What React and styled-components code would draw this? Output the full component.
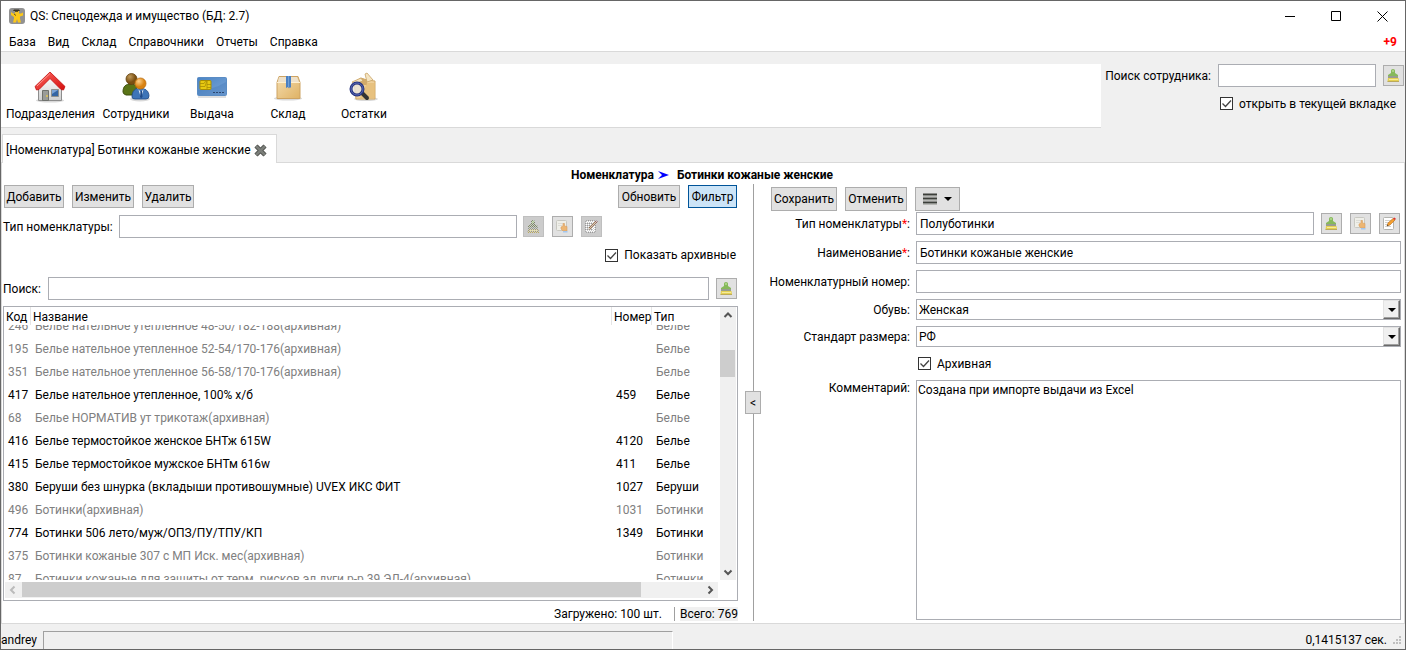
import React, { useLayoutEffect, useRef, useState } from 'react';
import styled, { createGlobalStyle, css } from 'styled-components';

const GlobalStyle = createGlobalStyle`
  * {
    box-sizing: border-box;
  }

  body {
    margin: 0;
  }

  body, button, input, select, textarea {
    font-family: Roboto, 'Noto Sans', sans-serif;
    font-size: 12px;
    line-height: 16px;
    color: #000;
  }
`;

const Window = styled.div`
  height: 100vh;
  min-height: 480px;
  display: flex;
  flex-direction: column;
  overflow: hidden;
  background: #f0f0f0;
  border: 1px solid #666;
  white-space: nowrap;
`;

const TitleBar = styled.header`
  height: 30px;
  flex: none;
  display: flex;
  align-items: center;
  gap: 5px;
  padding-left: 8px;
  background: #fff;
`;

const WindowTitle = styled.span`
  flex: 1;
`;

const WindowButtons = styled.div`
  display: flex;
`;

const WindowButton = styled.button`
  width: 46px;
  height: 29px;
  display: flex;
  align-items: center;
  justify-content: center;
  padding: 0;
  border: none;
  background: none;
`;

const MenuBar = styled.nav`
  height: 21px;
  flex: none;
  display: flex;
  align-items: center;
  gap: 12px;
  padding: 2px 8px 0;
  background: #fff;
  border-bottom: 1px solid #d9d9d9;
`;

const MenuItem = styled.button`
  padding: 0;
  border: none;
  background: none;
`;

const Notifications = styled.strong`
  margin-left: auto;
  color: #f00;
`;

const TopArea = styled.div`
  flex: none;
  display: flex;
  gap: 4px;
  padding: 12px 1px 6px 0;
`;

const Toolbar = styled.div`
  flex: 1;
  height: 64px;
  display: flex;
  padding-left: 2px;
  background: #fff;
  border-bottom: 1px solid #d9d9d9;
`;

const ToolButton = styled.button`
  min-width: 76px;
  display: flex;
  flex-direction: column;
  align-items: center;
  gap: 3px;
  padding: 7px 3px 0;
  border: none;
  background: none;
`;

const EmployeeSearch = styled.div`
  display: grid;
  grid-template-columns: auto 158px 21px;
  grid-template-rows: 23px 23px;
  align-items: center;
  row-gap: 5px;
  column-gap: 7px;
`;

const CheckLabel = styled.label`
  display: flex;
  align-items: center;
  gap: 6px;
`;

const EmployeeCheck = styled(CheckLabel)`
  grid-column: 2 / 4;
  padding-left: 2px;
`;

const CheckWrap = styled.span`
  position: relative;
  width: 13px;
  height: 13px;
  flex: none;

  svg {
    position: absolute;
    inset: 0;
    pointer-events: none;
  }
`;

const CheckInput = styled.input`
  appearance: none;
  display: block;
  width: 13px;
  height: 13px;
  margin: 0;
  border: 1px solid #333;
  background: #fff;

  &:not(:checked) + svg {
    display: none;
  }
`;

const TextInput = styled.input`
  flex: 1;
  min-width: 0;
  width: 100%;
  height: 23px;
  padding: 0 3px;
  border: 1px solid #abadb3;
  border-radius: 0;
  background: #fff;
  outline: none;
`;

const Button = styled.button`
  height: ${props => (props.$tall ? '24px' : '23px')};
  min-width: ${props => props.$width};
  display: flex;
  align-items: center;
  justify-content: center;
  gap: 7px;
  padding: 0 1px;
  border: 1px solid #adadad;
  background: #e1e1e1;

  ${props => props.$active && css`
    border-color: #005499;
    background: #cce4f7;
  `}
`;

const IconButton = styled.button`
  width: 21px;
  height: 21px;
  flex: none;
  display: flex;
  align-items: center;
  justify-content: center;
  padding: 0;
  border: 1px solid #adadad;
  background: #e1e1e1;

  &:disabled {
    border-color: #bfbfbf;
    background: #ccc;
  }
`;

const IconGroup = styled.div`
  display: flex;
  gap: 8px;
`;

const Tabs = styled.div`
  height: 29px;
  flex: none;
  display: flex;
  border-bottom: 1px solid #d9d9d9;
`;

const Tab = styled.div`
  height: 29px;
  display: flex;
  align-items: center;
  gap: 3px;
  margin-left: 1px;
  padding: 2px 9px 0 3px;
  background: #fff;
  border: 1px solid #d9d9d9;
  border-bottom: none;
`;

const TabClose = styled.button`
  display: flex;
  padding: 0;
  border: none;
  background: none;
`;

const Page = styled.main`
  flex: 1;
  min-height: 0;
  display: flex;
  flex-direction: column;
  padding: 0 3px 2px 1px;
  background: #fff;
  border: 1px solid #d9d9d9;
  border-width: 0 1px;
`;

const PageTitle = styled.h1`
  height: 21px;
  flex: none;
  display: flex;
  align-items: center;
  justify-content: center;
  gap: 8px;
  margin: 0;
  padding-top: 3px;
  font-size: 12px;
  font-weight: 700;

  svg {
    margin-left: -4px;
  }
`;

const Panes = styled.div`
  flex: 1;
  min-height: 0;
  display: grid;
  grid-template-columns: minmax(0, 735fr) 16px minmax(0, 633fr);
  column-gap: 7px;
`;

const JournalPane = styled.section`
  min-height: 0;
  display: flex;
  flex-direction: column;
`;

const ButtonRow = styled.div`
  flex: none;
  display: flex;
  gap: 8px;
  padding: 1px 1px 0;
`;

const Spacer = styled.span`
  flex: 1;
`;

const FilterRow = styled.div`
  display: flex;
  align-items: center;
  gap: 6px;
  margin-top: 7px;
  padding-right: 136px;
`;

const ArchiveRow = styled.div`
  display: flex;
  justify-content: flex-end;
  margin-top: 9px;
  padding-right: 2px;
`;

const SearchRow = styled.div`
  display: flex;
  align-items: center;
  gap: 7px;
  margin-top: 14px;
  padding-right: 1px;
`;

const JournalFrame = styled.div`
  flex: 1;
  min-height: 0;
  display: grid;
  grid-template-columns: minmax(0, 1fr) 16px;
  grid-template-rows: minmax(0, 1fr) 16px;
  row-gap: 2px;
  margin-top: 6px;
  padding-right: 1px;
  padding-bottom: 2px;
  border: 1px solid #abadb3;
`;

const TableViewport = styled.div`
  min-height: 0;
  overflow: hidden;
`;

const Table = styled.table`
  width: 100%;
  table-layout: fixed;
  border-collapse: separate;
  border-spacing: 0;
`;

const HeadCell = styled.th`
  position: sticky;
  top: 0;
  width: ${props => props.$width || 'auto'};
  height: 18px;
  padding: 2px 0 0 2px;
  background: #fff;
  border-right: 1px solid #e5e5e5;
  font-weight: 400;
  text-align: left;

  &:last-child {
    border-right: none;
  }
`;

const Row = styled.tr`
  color: ${props => (props.$archived ? '#808080' : '#000')};
`;

const Cell = styled.td`
  height: 23px;
  padding: 0 0 0 4px;
`;

const VerticalScroll = styled.div`
  display: flex;
  flex-direction: column;
  background: #f0f0f0;
`;

const HorizontalScroll = styled.div`
  display: flex;
  margin: 0 2px 0 1px;
  background: #f0f0f0;
`;

const ScrollArrow = styled.button`
  width: 16px;
  height: 16px;
  flex: none;
  display: flex;
  align-items: center;
  justify-content: center;
  padding: 0;
  border: none;
  background: none;
`;

const VerticalTrack = styled.div`
  flex: 1;
  padding-top: 27px;
`;

const VerticalThumb = styled.div`
  width: 15px;
  height: 27px;
  background: #cdcdcd;
`;

const HorizontalTrack = styled.div`
  flex: 1;
  padding-left: 1px;
`;

const HorizontalThumb = styled.div`
  width: 91%;
  height: 15px;
  background: #cdcdcd;
`;

const Totals = styled.div`
  height: 20px;
  flex: none;
  display: flex;
  align-items: center;
  justify-content: flex-end;
  padding-top: 6px;
`;

const Loaded = styled.span`
  padding-right: 12px;
`;

const Total = styled.span`
  height: 14px;
  display: flex;
  align-items: center;
  margin-left: 5px;
  background: #f0f0f0;
`;

const TotalDivider = styled.span`
  width: 1px;
  height: 14px;
  background: #a0a0a0;
`;

const Splitter = styled.div`
  display: flex;
  flex-direction: column;
  align-items: center;
`;

const SplitterLine = styled.span`
  flex: 1;
  width: 1px;
  background: #a0a0a0;
`;

const CollapseButton = styled(Button)`
  width: 16px;
`;

const EditorPane = styled.section`
  min-height: 0;
  display: flex;
  flex-direction: column;
  padding: 3px 0 1px;
`;

const EditorButtons = styled.div`
  display: flex;
  gap: 8px;
  padding-left: 3px;
`;

const Form = styled.div`
  flex: 1;
  min-height: 0;
  display: grid;
  grid-template-columns: 142px minmax(0, 1fr);
  grid-template-rows: 23px 23px 23px 21px 21px 21px minmax(0, 1fr);
  gap: 6px;
  align-items: center;
  margin-top: 1px;
`;

const FieldLabel = styled.label`
  justify-self: end;
  align-self: ${props => (props.$top ? 'start' : 'center')};
`;

const Required = styled.span`
  color: #f00;
`;

const FieldRow = styled.div`
  display: flex;
  align-items: center;
  gap: 7px;
  padding-right: 1px;
`;

const SelectWrap = styled.div`
  position: relative;
  height: 21px;
`;

const Select = styled.select`
  appearance: none;
  display: block;
  width: 100%;
  height: 21px;
  padding: 0 20px 0 2px;
  border: 1px solid #abadb3;
  border-radius: 0;
  background: #fff;
  outline: none;
`;

const SelectArrow = styled.span`
  position: absolute;
  top: 1px;
  right: 1px;
  bottom: 1px;
  width: 17px;
  display: flex;
  align-items: center;
  justify-content: center;
  background: #f0f0f0;
  border: 1px solid #e3e3e3;
  border-right-color: #696969;
  border-bottom-color: #696969;
  box-shadow: inset -1px -1px #a0a0a0;
  pointer-events: none;
`;

const ArchivedField = styled(CheckLabel)`
  grid-column: 2;
  padding-left: 2px;
`;

const Comment = styled.textarea`
  display: block;
  width: 100%;
  height: 100%;
  padding: 1px;
  border: 1px solid #abadb3;
  border-radius: 0;
  background: #fff;
  outline: none;
  resize: none;
`;

const StatusBar = styled.footer`
  height: 26px;
  flex: none;
  display: flex;
  align-items: center;
  padding: 7px 3px 0 0;
  border-top: 1px solid #d9d9d9;
`;

const StatusUser = styled.span`
  width: 36px;
`;

const StatusInset = styled.div`
  width: 45%;
  height: 19px;
  margin-left: 6px;
  border-top: 1px solid #a0a0a0;
  border-left: 1px solid #a0a0a0;
  border-right: 1px solid #fff;
`;

const Timing = styled.span`
  margin-left: auto;
  margin-right: 6px;
`;

const AppIcon = () => (
  <svg width="16" height="16" viewBox="0 0 16 16">
    <rect width="16" height="16" rx="3" fill="#929292" />
    <path d="M5 1.500h5l1 1.500H4z" fill="#3a3526" />
    <path d="M6 3h4v3H6z" fill="#f0c22c" />
    <path d="M2 4l2 1.500h8l2-1v3l-3 1v2l1 4H9L8 11l-1 3.500H4l1-4V9L2 7z" fill="#fdc818" />
    <path d="M6 3.500h3M5 6l2 1.500" stroke="#3b3420" strokeWidth=".8" />
  </svg>
);

const HouseIcon = () => (
  <svg width="32" height="32" viewBox="0 0 32 32">
    <defs>
      <linearGradient id="wall" x2="0" y2="1">
        <stop stopColor="#fff" />
        <stop offset="1" stopColor="#cfcfcf" />
      </linearGradient>
      <linearGradient id="roof" x2="1" y2="1">
        <stop stopColor="#ff6a62" />
        <stop offset="1" stopColor="#d40d0d" />
      </linearGradient>
    </defs>
    <ellipse cx="16" cy="29.500" rx="14" ry="2" fill="#000" opacity=".15" />
    <path d="M4.500 15.500L16 5l11.500 10.500v14h-23z" fill="url(#wall)" stroke="#8d8d8d" />
    <path d="M8.500 19.500h6v10h-6z" fill="#9a9c98" stroke="#6f716d" />
    <circle cx="13" cy="25" r="1" fill="#e6c64f" />
    <path d="M17.500 18.500h7v7h-7z" fill="#3465a4" stroke="#8d8f8c" />
    <path d="M18 19h6l-6 4z" fill="#7ba3d5" />
    <path d="M16 1L1 15.500 2.500 19 5 18.500l11-11 11 11 2.500.5 1.500-3.500z" fill="url(#roof)" stroke="#c21010" strokeWidth=".8" />
    <path d="M16 2.500L3 15" stroke="#ff9a94" fill="none" />
  </svg>
);

const PeopleIcon = () => (
  <svg width="32" height="32" viewBox="0 0 32 32">
    <defs>
      <radialGradient id="brownHead" cx=".35" cy=".3">
        <stop stopColor="#c09a5b" />
        <stop offset="1" stopColor="#7b5012" />
      </radialGradient>
      <radialGradient id="orangeHead" cx=".35" cy=".3">
        <stop stopColor="#ffd28c" />
        <stop offset="1" stopColor="#d98211" />
      </radialGradient>
    </defs>
    <ellipse cx="20" cy="28" rx="10" ry="2.500" fill="#000" opacity=".15" />
    <path d="M3 21c0-6 3-8 8-8s7 3 7 9l-4 2H6q-3-1-3-3z" fill="#5a7417" stroke="#3d4e0d" />
    <circle cx="11.500" cy="8" r="5.500" fill="url(#brownHead)" stroke="#65420f" strokeWidth=".8" />
    <path d="M12 26c0-6 3-9 8-9s9 3 9 8q0 3-3 3H15q-3 0-3-2z" fill="#3e75b8" stroke="#204a87" strokeWidth=".8" />
    <path d="M17 17l4 4 4-4-1 0-3 10-3-10z" fill="#e9f0f8" />
    <path d="M20.500 20h1.500l.5 6-1.500 1.500L20 26z" fill="#204a87" />
    <circle cx="20.500" cy="12.500" r="5.500" fill="url(#orangeHead)" stroke="#bd6c0b" strokeWidth=".8" />
  </svg>
);

const CardIcon = () => (
  <svg width="32" height="32" viewBox="0 0 32 32">
    <defs>
      <linearGradient id="card" x2="1" y2="1">
        <stop stopColor="#4a84c4" />
        <stop offset="1" stopColor="#7aa5d8" />
      </linearGradient>
    </defs>
    <path d="M2 25h28v2H2z" fill="#000" opacity=".12" />
    <rect x="1.500" y="6.500" width="29" height="18" rx="1" fill="url(#card)" stroke="#5a8cc4" />
    <path d="M2 19q15 0 28-8v13H2z" fill="#3b70b1" opacity=".3" />
    <rect x="4" y="9.500" width="11" height="9" rx="1" fill="#e8c911" stroke="#a98d05" />
    <path d="M4 12.500h4l2-3m-6 6h5l2-6m0 0v9m0-5h4m-4 3h4" stroke="#a98d05" fill="none" strokeWidth=".8" />
    <path d="M17 21.500h11" stroke="#2c4870" strokeDasharray="2 1" />
  </svg>
);

const BoxIcon = () => (
  <svg width="32" height="32" viewBox="0 0 32 32">
    <defs>
      <linearGradient id="box" x2="1" y2="1">
        <stop stopColor="#f4dcae" />
        <stop offset="1" stopColor="#dfb264" />
      </linearGradient>
    </defs>
    <ellipse cx="16" cy="27.500" rx="14" ry="2" fill="#000" opacity=".15" />
    <path d="M7 5.500h19l2 6v16H5v-16z" fill="url(#box)" stroke="#cda362" />
    <path d="M7 6h18l2 5H6z" fill="#eee1ca" />
    <path d="M5 11.500h23" stroke="#fff0cf" />
    <path d="M14 5h5v12l-1-1-1 1.500-1-1.500-2 1z" fill="#4a80c2" />
    <path d="M16.500 5v11" stroke="#719fd4" />
  </svg>
);

const StockIcon = () => (
  <svg width="32" height="32" viewBox="0 0 32 32">
    <ellipse cx="18" cy="28" rx="12" ry="2" fill="#000" opacity=".15" />
    <path d="M6 11l7-4 6 2 8 1v18H8z" fill="#efd09a" stroke="#d0a968" />
    <path d="M13 7l6 2v5H7z" fill="#d2aa6a" />
    <path d="M17 3l2-1 6 7-6 2zM4 11l9-4 2 3-9 3z" fill="#f5e4c0" stroke="#c9a366" strokeWidth=".8" />
    <path d="M19 12h8v15H12z" fill="#e4ba73" opacity=".7" />
    <path d="M14 22l5 5" stroke="#333" strokeWidth="4" strokeLinecap="round" />
    <circle cx="9" cy="18" r="6" fill="#e8e5df" fillOpacity=".8" stroke="#26327e" strokeWidth="3" />
    <circle cx="9" cy="18" r="6" fill="none" stroke="#5969b4" />
  </svg>
);

// Every other pixel is covered, the way GTK2 paints insensitive icons
const Dither = ({ id }) => (
  <>
    <defs>
      <pattern id={id} width="2" height="2" patternUnits="userSpaceOnUse">
        <path d="M0 0h1v1H0zM1 1h1v1H1z" fill="#ccc" />
      </pattern>
    </defs>
    <rect width="15" height="15" fill={`url(#${id})`} shapeRendering="crispEdges" />
  </>
);

const BrushIcon = ({ disabled }) => (
  <svg width="15" height="15" viewBox="0 0 15 15">
    <path d="M5 2.500Q5 1 7 1t2 1.500V5l3 2v2H2V7l3-2z" fill={disabled ? '#7d8a62' : '#86b95a'} />
    <path d="M6 2h2v2H6z" fill="#a8d383" />
    <path d="M2 8h10v2.500H2z" fill="#979d8e" />
    <path d="M2 10h10.500l.5 3.500H1.500z" fill={disabled ? '#aaa06a' : '#e5d152'} />
    <path d="M3 11.500h9" stroke="#f5eb9b" />
    <path d="M1.500 13.500H13" stroke="#bba95c" />
    {disabled && <Dither id="ditherBrush" />}
  </svg>
);

const PickIcon = () => (
  <svg width="15" height="15" viewBox="0 0 15 15">
    <rect x="1.500" y="1.500" width="10" height="10" rx="1" fill="#efefe9" stroke="#c8c8c1" />
    <path d="M3 4.500h6M3 6.500h4" stroke="#dcdcd6" />
    <path d="M6 8l2-1V4.500h1.500V7L12 7.500v4.500H8L6 10z" fill="#edb673" stroke="#d79f64" strokeWidth=".6" />
    <path d="M8 12h4.500v1.500H8z" fill="#a3c6ee" />
  </svg>
);

const EditIcon = ({ disabled }) => (
  <svg width="15" height="15" viewBox="0 0 15 15">
    <rect x="1.500" y="1.500" width="10" height="12" rx="1" fill="#fff" stroke={disabled ? '#999' : '#b3b4b0'} />
    <path d="M3 4.500h6M3 6.500h4M3 8.500h3M3 10.500h6" stroke={disabled ? '#999' : '#d2d3cf'} />
    <path d="M5 10l1-3 5-4.500L13 4 8 9z" fill={disabled ? '#a67c5a' : '#f4a02f'} stroke="#b86b1d" strokeWidth=".6" />
    <path d="M11 2.500l1.500-1L14 3 12.800 4z" fill={disabled ? '#8c5050' : '#dd3131'} />
    <path d="M5 10l.5-1.500 1 1z" fill="#333" />
    {disabled && <Dither id="ditherEdit" />}
  </svg>
);

const chevrons = {
  up: 'M1.500 7L5 3.500 8.500 7',
  down: 'M1.500 3.500L5 7l3.500-3.500',
  left: 'M6.500 1.500L3 5l3.500 3.500',
  right: 'M3.500 1.500L7 5 3.500 8.500',
};

const Chevron = ({ dir, color = '#555' }) => (
  <svg width="10" height="10" viewBox="0 0 10 10">
    <path d={chevrons[dir]} fill="none" stroke={color} strokeWidth="2" />
  </svg>
);

const DownTriangle = () => (
  <svg width="8" height="4" viewBox="0 0 8 4">
    <path d="M0 0h8L4 4z" />
  </svg>
);

const CheckBox = ({ id }) => (
  <CheckWrap>
    <CheckInput id={id} type="checkbox" defaultChecked />
    <svg width="13" height="13" viewBox="0 0 13 13">
      <path d="M2.500 6.500l3 3L11 3.500" fill="none" stroke="#444" strokeWidth="1.300" />
    </svg>
  </CheckWrap>
);

const menu = ['База', 'Вид', 'Склад', 'Справочники', 'Отчеты', 'Справка'];

const tools = [
  { title: 'Подразделения', icon: HouseIcon },
  { title: 'Сотрудники', icon: PeopleIcon },
  { title: 'Выдача', icon: CardIcon },
  { title: 'Склад', icon: BoxIcon },
  { title: 'Остатки', icon: StockIcon },
];

const items = [
  { code: 246, name: 'Белье нательное утепленное 48-50/182-188(архивная)', type: 'Белье', archived: true },
  { code: 195, name: 'Белье нательное утепленное 52-54/170-176(архивная)', type: 'Белье', archived: true },
  { code: 351, name: 'Белье нательное утепленное 56-58/170-176(архивная)', type: 'Белье', archived: true },
  { code: 417, name: 'Белье нательное утепленное, 100% х/б', number: '459', type: 'Белье' },
  { code: 68, name: 'Белье НОРМАТИВ ут трикотаж(архивная)', type: 'Белье', archived: true },
  { code: 416, name: 'Белье термостойкое женское БНТж 615W', number: '4120', type: 'Белье' },
  { code: 415, name: 'Белье термостойкое мужское БНТм 616w', number: '411', type: 'Белье' },
  { code: 380, name: 'Беруши без шнурка (вкладыши противошумные) UVEX ИКС ФИТ', number: '1027', type: 'Беруши' },
  { code: 496, name: 'Ботинки(архивная)', number: '1031', type: 'Ботинки', archived: true },
  { code: 774, name: 'Ботинки 506 лето/муж/ОПЗ/ПУ/ТПУ/КП', number: '1349', type: 'Ботинки' },
  { code: 375, name: 'Ботинки кожаные 307 с МП Иск. мес(архивная)', type: 'Ботинки', archived: true },
  { code: 87, name: 'Ботинки кожаные для защиты от терм. рисков эл дуги р-р 39 ЭЛ-4(архивная)', type: 'Ботинки', archived: true },
];

const Journal = () => {
  const viewportRef = useRef(null);
  const [filter, setFilter] = useState(true);

  useLayoutEffect(() => {
    viewportRef.current.scrollTop = 11;
  }, []);

  return (
    <JournalPane>
      <ButtonRow>
        <Button $width="60px">Добавить</Button>
        <Button $width="62px">Изменить</Button>
        <Button $width="52px">Удалить</Button>
        <Spacer />
        <Button $width="62px">Обновить</Button>
        <Button $width="49px" $active={filter} onClick={() => setFilter(!filter)}>Фильтр</Button>
      </ButtonRow>
      <FilterRow>
        <label htmlFor="filterType">Тип номенклатуры:</label>
        <TextInput id="filterType" />
        <IconGroup>
          <IconButton disabled aria-label="Очистить"><BrushIcon disabled /></IconButton>
          <IconButton aria-label="Выбрать"><PickIcon /></IconButton>
          <IconButton disabled aria-label="Открыть"><EditIcon disabled /></IconButton>
        </IconGroup>
      </FilterRow>
      <ArchiveRow>
        <CheckLabel htmlFor="showArchived">
          <CheckBox id="showArchived" />
          Показать архивные
        </CheckLabel>
      </ArchiveRow>
      <SearchRow>
        <label htmlFor="search">Поиск:</label>
        <TextInput id="search" />
        <IconButton aria-label="Очистить поиск"><BrushIcon /></IconButton>
      </SearchRow>
      <JournalFrame>
        <TableViewport ref={viewportRef}>
          <Table>
            <thead>
              <tr>
                <HeadCell $width="27px">Код</HeadCell>
                <HeadCell>Название</HeadCell>
                <HeadCell $width="40px">Номер</HeadCell>
                <HeadCell $width="68px">Тип</HeadCell>
              </tr>
            </thead>
            <tbody>
              {items.map(item => (
                <Row key={item.code} $archived={item.archived}>
                  <Cell>{item.code}</Cell>
                  <Cell>{item.name}</Cell>
                  <Cell>{item.number}</Cell>
                  <Cell>{item.type}</Cell>
                </Row>
              ))}
            </tbody>
          </Table>
        </TableViewport>
        <VerticalScroll>
          <ScrollArrow aria-label="Вверх"><Chevron dir="up" /></ScrollArrow>
          <VerticalTrack><VerticalThumb /></VerticalTrack>
          <ScrollArrow aria-label="Вниз"><Chevron dir="down" /></ScrollArrow>
        </VerticalScroll>
        <HorizontalScroll>
          <ScrollArrow aria-label="Влево"><Chevron dir="left" color="#bbb" /></ScrollArrow>
          <HorizontalTrack><HorizontalThumb /></HorizontalTrack>
          <ScrollArrow aria-label="Вправо"><Chevron dir="right" /></ScrollArrow>
        </HorizontalScroll>
      </JournalFrame>
      <Totals>
        <Loaded>Загружено: 100 шт.</Loaded>
        <TotalDivider />
        <Total>Всего: 769</Total>
      </Totals>
    </JournalPane>
  );
};

const Editor = () => (
  <EditorPane>
    <EditorButtons>
      <Button $tall $width="66px">Сохранить</Button>
      <Button $tall $width="62px">Отменить</Button>
      <Button $tall $width="45px" aria-label="Меню">
        <svg width="14" height="12" viewBox="0 0 14 12">
          <path d="M0 1.500h14M0 5.500h14M0 9.500h14" stroke="#3c3f3a" strokeWidth="2" />
          <path d="M0 3h14M0 7h14M0 11h14" stroke="#8d8f8a" />
        </svg>
        <DownTriangle />
      </Button>
    </EditorButtons>
    <Form>
      <FieldLabel htmlFor="type">Тип номенклатуры<Required>*</Required>:</FieldLabel>
      <FieldRow>
        <TextInput id="type" defaultValue="Полуботинки" />
        <IconGroup>
          <IconButton aria-label="Очистить"><BrushIcon /></IconButton>
          <IconButton aria-label="Выбрать"><PickIcon /></IconButton>
          <IconButton aria-label="Открыть"><EditIcon /></IconButton>
        </IconGroup>
      </FieldRow>
      <FieldLabel htmlFor="name">Наименование<Required>*</Required>:</FieldLabel>
      <TextInput id="name" defaultValue="Ботинки кожаные женские" />
      <FieldLabel htmlFor="number">Номенклатурный номер:</FieldLabel>
      <TextInput id="number" />
      <FieldLabel htmlFor="shoes">Обувь:</FieldLabel>
      <SelectWrap>
        <Select id="shoes">
          <option>Женская</option>
        </Select>
        <SelectArrow><DownTriangle /></SelectArrow>
      </SelectWrap>
      <FieldLabel htmlFor="standard">Стандарт размера:</FieldLabel>
      <SelectWrap>
        <Select id="standard">
          <option>РФ</option>
        </Select>
        <SelectArrow><DownTriangle /></SelectArrow>
      </SelectWrap>
      <ArchivedField htmlFor="archived">
        <CheckBox id="archived" />
        Архивная
      </ArchivedField>
      <FieldLabel htmlFor="comment" $top>Комментарий:</FieldLabel>
      <Comment id="comment" defaultValue="Создана при импорте выдачи из Excel" />
    </Form>
  </EditorPane>
);

const App = () => (
  <>
    <GlobalStyle />
    <Window>
      <TitleBar>
        <AppIcon />
        <WindowTitle>QS: Спецодежда и имущество (БД: 2.7)</WindowTitle>
        <WindowButtons>
          <WindowButton aria-label="Свернуть">
            <svg width="11" height="11"><path d="M0 5.500h10" stroke="#000" /></svg>
          </WindowButton>
          <WindowButton aria-label="Развернуть">
            <svg width="11" height="11"><path d="M.5.500h9v9h-9z" fill="none" stroke="#000" /></svg>
          </WindowButton>
          <WindowButton aria-label="Закрыть">
            <svg width="11" height="11"><path d="M.5.500l10 10M10.500.500l-10 10" stroke="#000" /></svg>
          </WindowButton>
        </WindowButtons>
      </TitleBar>
      <MenuBar>
        {menu.map(title => <MenuItem key={title}>{title}</MenuItem>)}
        <Notifications>+9</Notifications>
      </MenuBar>
      <TopArea>
        <Toolbar>
          {tools.map(({ title, icon: Icon }) => (
            <ToolButton key={title}>
              <Icon />
              {title}
            </ToolButton>
          ))}
        </Toolbar>
        <EmployeeSearch>
          <label htmlFor="employee">Поиск сотрудника:</label>
          <TextInput id="employee" />
          <IconButton aria-label="Очистить"><BrushIcon /></IconButton>
          <EmployeeCheck htmlFor="currentTab">
            <CheckBox id="currentTab" />
            открыть в текущей вкладке
          </EmployeeCheck>
        </EmployeeSearch>
      </TopArea>
      <Tabs>
        <Tab>
          [Номенклатура] Ботинки кожаные женские
          <TabClose aria-label="Закрыть вкладку">
            <svg width="13" height="13" viewBox="0 0 13 13">
              <path d="M2 2l9 9M11 2l-9 9" stroke="#4c4f4b" strokeWidth="4.500" />
              <path d="M2 2l9 9M11 2l-9 9" stroke="#7c7f7a" strokeWidth="2.500" />
            </svg>
          </TabClose>
        </Tab>
      </Tabs>
      <Page>
        <PageTitle>
          Номенклатура
          <svg width="11" height="8" viewBox="0 0 11 8">
            <path d="M0 0l11 4L0 8l4-4z" fill="#00f" />
          </svg>
          Ботинки кожаные женские
        </PageTitle>
        <Panes>
          <Journal />
          <Splitter>
            <SplitterLine />
            <CollapseButton>&lt;</CollapseButton>
            <SplitterLine />
          </Splitter>
          <Editor />
        </Panes>
      </Page>
      <StatusBar>
        <StatusUser>andrey</StatusUser>
        <StatusInset />
        <Timing>0,1415137 сек.</Timing>
        <svg width="9" height="9" viewBox="0 0 9 9">
          <path d="M6 0h2v2H6zM3 3h2v2H3zM6 3h2v2H6zM0 6h2v2H0zM3 6h2v2H3zM6 6h2v2H6z" fill="#bfbfbf" />
        </svg>
      </StatusBar>
    </Window>
  </>
);

export default App;
